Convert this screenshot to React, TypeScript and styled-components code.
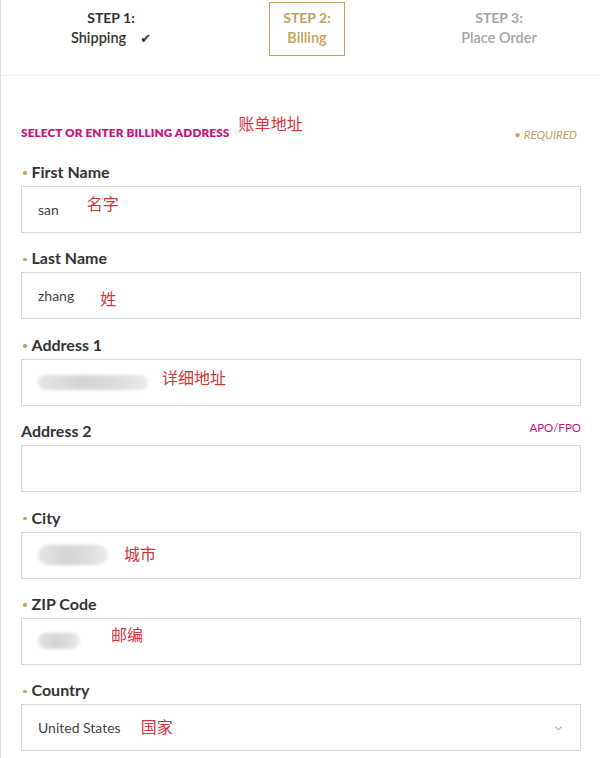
import styled, { createGlobalStyle } from 'styled-components';
import { ChevronDown } from 'lucide-react';

const GlobalStyle = createGlobalStyle`
  html, body { margin: 0; padding: 0; background: #fff; }
  body { font-family: Lato, "Noto Sans", "Noto Sans CJK SC", sans-serif; color: #333; }
`;

const GOLD = '#c3a05b';
const MAGENTA = '#c8147c';

const Page = styled.div`
  width: 600px;
  min-height: 758px;
  box-sizing: border-box;
  border-left: 1px solid #dcdcdc;
`;

const Steps = styled.div`
  display: grid;
  grid-template-columns: 196px 196px 188px;
  padding: 2px 0 0 12px;
  height: 73px;
  border-bottom: 1px solid #f0f0f0;
`;

const StepCell = styled.div`
  display: flex;
  justify-content: center;
  align-items: flex-start;
`;

const StepBox = styled.div<{ $state: 'done' | 'active' | 'todo' }>`
  border: 1px solid ${p => (p.$state === 'active' ? GOLD : 'transparent')};
  padding: 5px 13px 7px;
  text-align: center;
  font-size: 14px;
  line-height: 20px;
  font-weight: 700;
  color: ${p => (p.$state === 'active' ? GOLD : p.$state === 'done' ? '#333' : '#a5a5a5')};
`;

const StepName = styled.div`
  font-weight: 600;
  font-size: 14.5px;
`;

const Check = styled.span`
  font-family: "DejaVu Sans", sans-serif;
  font-size: 13px;
  margin-left: 14px;
  color: #333;
`;

const Content = styled.div`
  padding: 44px 19px 0 20px;
`;

const TitleRow = styled.div`
  display: flex;
  align-items: flex-end;
  justify-content: space-between;
  margin-bottom: 23px;
`;

const Title = styled.div`
  display: flex;
  align-items: flex-end;
  font-size: 11.8px;
  font-weight: 800;
  color: ${MAGENTA};
  letter-spacing: 0.1px;
  text-transform: uppercase;
`;

const Required = styled.div`
  font-size: 11.5px;
  font-style: italic;
  color: ${GOLD};
  margin-right: 4px;
  margin-bottom: -1px;
`;

const Note = styled.span<{ $gap: number; $shift?: number }>`
  font-family: "Noto Sans CJK SC", sans-serif;
  font-size: 16px;
  font-weight: 400;
  color: #d2343a;
  margin-left: ${p => p.$gap}px;
  position: relative;
  top: ${p => p.$shift ?? 0}px;
  line-height: 20px;
`;

const Field = styled.div`
  margin-bottom: 16.4px;
`;

const LabelRow = styled.div`
  display: flex;
  justify-content: space-between;
  align-items: center;
  height: 20px;
  margin-bottom: 3px;
`;

const Label = styled.label<{ $required?: boolean }>`
  font-size: 16px;
  font-weight: 700;
  color: #333;
  display: flex;
  align-items: center;
  margin-top: -3px;
  &::before {
    content: '';
    display: ${p => (p.$required ? 'inline-block' : 'none')};
    width: 3.5px;
    height: 3.5px;
    border-radius: 50%;
    background: ${GOLD};
    margin: 3px 5px 0 2px;
  }
`;

const Aside = styled.span`
  font-size: 11.5px;
  color: ${MAGENTA};
  position: relative;
  top: -5px;
`;

const Input = styled.div`
  display: flex;
  align-items: center;
  height: 47px;
  box-sizing: border-box;
  border: 1px solid #d6d6d6;
  padding: 0 16px;
  font-size: 14px;
  color: #444;
  position: relative;
`;

const Blur = styled.span<{ $w: number; $h: number }>`
  display: inline-block;
  width: ${p => p.$w}px;
  height: ${p => p.$h}px;
  border-radius: ${p => p.$h / 2}px;
  background: linear-gradient(90deg, #e6e6e6, #d4d4d4 40%, #dcdcdc 70%, #ebebeb);
  filter: blur(1.5px);
`;

const Chevron = styled(ChevronDown)`
  position: absolute;
  right: 16px;
  top: 18px;
  color: #777;
`;

export default function App() {
  return (
    <Page>
      <GlobalStyle />
      <Steps>
        <StepCell>
          <StepBox $state="done">
            <div>STEP 1:</div>
            <StepName>Shipping<Check>✔</Check></StepName>
          </StepBox>
        </StepCell>
        <StepCell>
          <StepBox $state="active">
            <div>STEP 2:</div>
            <StepName>Billing</StepName>
          </StepBox>
        </StepCell>
        <StepCell>
          <StepBox $state="todo">
            <div>STEP 3:</div>
            <StepName>Place Order</StepName>
          </StepBox>
        </StepCell>
      </Steps>

      <Content>
        <TitleRow>
          <Title>
            Select or enter billing address
            <Note $gap={9} $shift={-7}>账单地址</Note>
          </Title>
          <Required>• REQUIRED</Required>
        </TitleRow>

        <Field>
          <LabelRow><Label $required>First Name</Label></LabelRow>
          <Input>san<Note $gap={28} $shift={-7}>名字</Note></Input>
        </Field>

        <Field>
          <LabelRow><Label $required>Last Name</Label></LabelRow>
          <Input>zhang<Note $gap={26} $shift={2}>姓</Note></Input>
        </Field>

        <Field>
          <LabelRow><Label $required>Address 1</Label></LabelRow>
          <Input><Blur $w={110} $h={15} /><Note $gap={14} $shift={-5}>详细地址</Note></Input>
        </Field>

        <Field>
          <LabelRow>
            <Label>Address 2</Label>
            <Aside>APO/FPO</Aside>
          </LabelRow>
          <Input />
        </Field>

        <Field>
          <LabelRow><Label $required>City</Label></LabelRow>
          <Input><Blur $w={70} $h={20} /><Note $gap={16} $shift={-2}>城市</Note></Input>
        </Field>

        <Field>
          <LabelRow><Label $required>ZIP Code</Label></LabelRow>
          <Input><Blur $w={42} $h={16} /><Note $gap={31} $shift={-7}>邮编</Note></Input>
        </Field>

        <Field>
          <LabelRow><Label $required>Country</Label></LabelRow>
          <Input>
            United States<Note $gap={20} $shift={-2}>国家</Note>
            <Chevron size={11} strokeWidth={2} />
          </Input>
        </Field>
      </Content>
    </Page>
  );
}
